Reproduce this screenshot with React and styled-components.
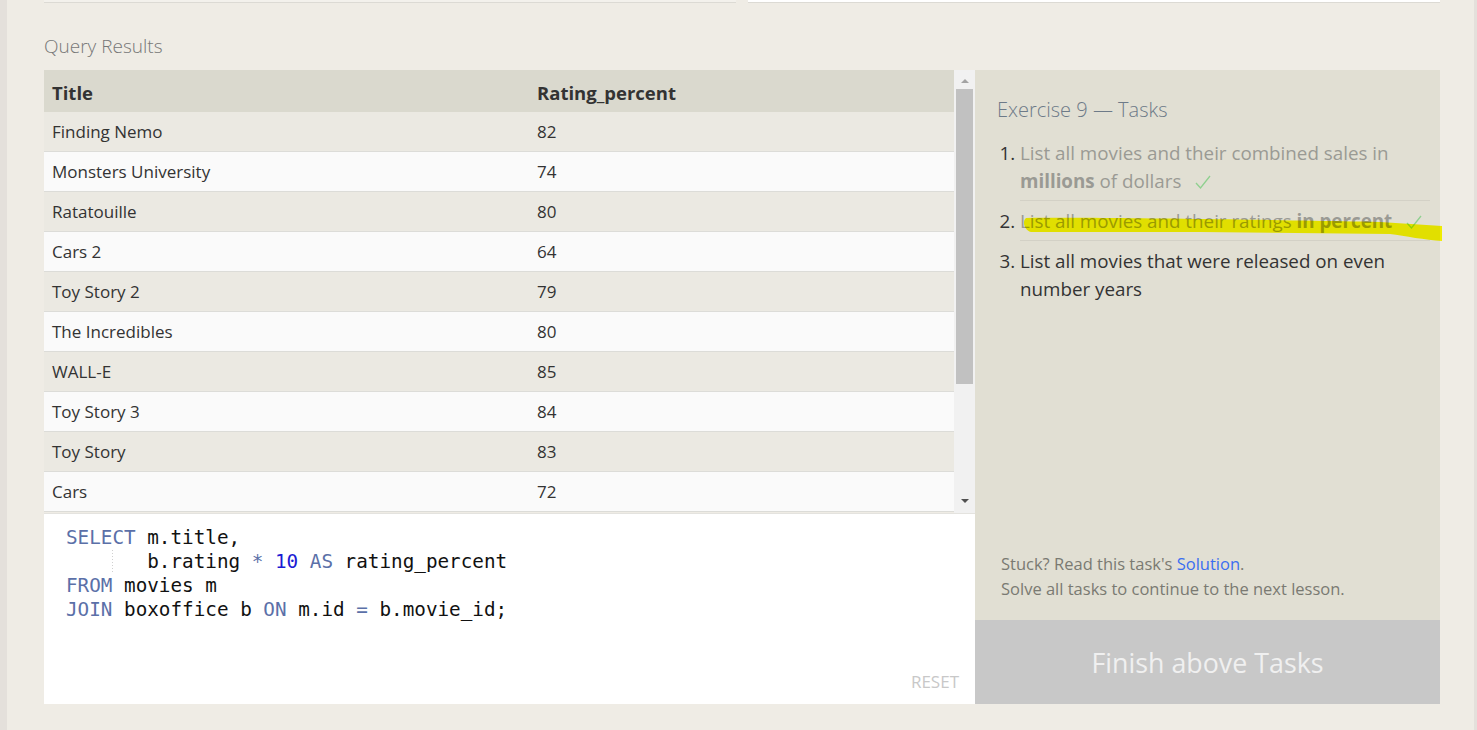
import styled, { createGlobalStyle } from "styled-components";

const GlobalStyle = createGlobalStyle`
  body {
    margin: 0;
    background: #e4e0db;
    font-family: "Open Sans", "Noto Sans", sans-serif;
    color: #333;
  }
`;

const Page = styled.div`
  margin: 0 3px 0 7px;
  min-height: 730px;
  background: #efece5;
  padding: 0 34px 0 37px;
  box-sizing: border-box;
  overflow: hidden;
`;

const TopStrip = styled.div`
  display: flex;
  gap: 12px;
  height: 3px;
`;

const TopPanel = styled.div`
  flex: ${(p) => (p.$wide ? "0 0 692px" : "1")};
  height: 2px;
  background: ${(p) => (p.$white ? "#fff" : "#f3f1ec")};
  border-bottom: 1px solid #dcdad4;
`;

const SectionLabel = styled.div`
  margin-top: 31px;
  height: 24px;
  line-height: 24px;
  font-size: 19px;
  font-weight: 300;
  color: #777;
  margin-bottom: 12px;
`;

const Workspace = styled.div`
  display: flex;
  height: 634px;
`;

const LeftColumn = styled.div`
  flex: 0 0 931px;
  display: flex;
  flex-direction: column;
`;

const ResultsArea = styled.div`
  display: flex;
  height: 444px;
  border-bottom: 1px solid #e4e3df;
  box-sizing: border-box;
`;

const TableWrap = styled.div`
  flex: 1;
  overflow: hidden;
`;

const Table = styled.table`
  width: 100%;
  table-layout: fixed;
  border-collapse: collapse;
  font-size: 17px;
`;

const HeadCell = styled.th`
  height: 42px;
  padding: 3px 8px 0;
  box-sizing: border-box;
  text-align: left;
  font-size: 18.5px;
  font-weight: 700;
  background: #dad9ce;
  color: #333;
  width: ${(p) => p.$w || "auto"};
`;

const Row = styled.tr`
  background: ${(p) => (p.$odd ? "#ebe9e2" : "#fafafa")};
`;

const Cell = styled.td`
  height: 39px;
  padding: 0 8px;
  border-bottom: 1px solid #dcdcd8;
  color: #333;
`;

const Scrollbar = styled.div`
  flex: 0 0 21px;
  background: #f1f1f1;
  display: flex;
  flex-direction: column;
  align-items: center;
  padding: 0 1px;
  box-sizing: border-box;
`;

const Arrow = styled.div`
  width: 0;
  height: 0;
  border-left: 4px solid transparent;
  border-right: 4px solid transparent;
  ${(p) =>
    p.$down
      ? "border-top: 4px solid #505050; margin-top: auto; margin-bottom: 10px;"
      : "border-bottom: 4px solid #a3a3a3; margin-top: 9px;"}
`;

const Thumb = styled.div`
  align-self: stretch;
  margin: 6px 1px 0 1px;
  height: 295px;
  background: #c1c1c1;
`;

const Editor = styled.div`
  flex: 1;
  background: #fff;
  display: flex;
  flex-direction: column;
  padding: 12px 16px 10px 22px;
`;

const Code = styled.pre`
  margin: 0;
  font-family: "DejaVu Sans Mono", "Liberation Mono", monospace;
  font-size: 19.3px;
  line-height: 24px;
  color: #111;
`;

const Kw = styled.span`
  color: ${(p) => (p.$num ? "#1b1bd3" : "#5b70a8")};
`;

const Guide = styled.span`
  background: repeating-linear-gradient(#d0d0d0 0 1px, transparent 1px 3px) left / 1px 100% no-repeat;
`;

const Reset = styled.div`
  margin-top: auto;
  align-self: flex-end;
  font-size: 17px;
  line-height: 24px;
  color: #c8c8c8;
  text-transform: uppercase;
`;

const TaskPanel = styled.div`
  flex: 0 0 465px;
  background: #e1dfd3;
  display: flex;
  flex-direction: column;
`;

const TaskHeading = styled.div`
  padding: 26px 0 0 22px;
  font-size: 20px;
  line-height: 28px;
  font-weight: 300;
  color: #6d7a88;
`;

const TaskList = styled.ol`
  position: relative;
  margin: 9px 10px 0 22px;
  padding: 0 0 0 23px;
  font-size: 18.8px;
  line-height: 28px;
`;

const Task = styled.li`
  padding: 6px 0 5px;
  color: ${(p) => (p.$done ? "#9a9a94" : "#333")};
  border-bottom: ${(p) => (p.$last ? "none" : "1px solid #d3d1c6")};

  &::marker {
    color: #333;
  }

  b {
    font-weight: 700;
  }
`;

const Check = styled.svg`
  margin-left: 14px;
  vertical-align: -1px;
`;

const Highlight = styled.svg`
  position: absolute;
  left: -20px;
  top: 0;
  pointer-events: none;
  mix-blend-mode: multiply;
  overflow: visible;
`;

const Footer = styled.div`
  margin-top: auto;
  padding: 0 0 19px 26px;
  font-size: 16.5px;
  line-height: 25px;
  color: #7a7a72;
`;

const Link = styled.a`
  color: #3b6ef0;
  text-decoration: none;
`;

const FinishButton = styled.button`
  height: 84px;
  border: none;
  background: #c8c8c8;
  color: #f0f0f0;
  font-family: inherit;
  font-size: 26.8px;
  font-weight: 400;
  cursor: default;
`;

const rows = [
  ["Finding Nemo", 82],
  ["Monsters University", 74],
  ["Ratatouille", 80],
  ["Cars 2", 64],
  ["Toy Story 2", 79],
  ["The Incredibles", 80],
  ["WALL-E", 85],
  ["Toy Story 3", 84],
  ["Toy Story", 83],
  ["Cars", 72],
];

function CheckMark() {
  return (
    <Check width="16" height="14" viewBox="0 0 16 14">
      <polyline points="1,8 5.5,13 15,1" fill="none" stroke="#8fd08f" strokeWidth="1.3" />
    </Check>
  );
}

export default function App() {
  return (
    <>
      <GlobalStyle />
      <Page>
        <TopStrip>
          <TopPanel $wide />
          <TopPanel $white />
        </TopStrip>
        <SectionLabel>Query Results</SectionLabel>
        <Workspace>
          <LeftColumn>
            <ResultsArea>
              <TableWrap>
                <Table>
                  <thead>
                    <tr>
                      <HeadCell $w="485px">Title</HeadCell>
                      <HeadCell>Rating_percent</HeadCell>
                    </tr>
                  </thead>
                  <tbody>
                    {rows.map(([title, rating], i) => (
                      <Row key={title} $odd={i % 2 === 0}>
                        <Cell>{title}</Cell>
                        <Cell>{rating}</Cell>
                      </Row>
                    ))}
                  </tbody>
                </Table>
              </TableWrap>
              <Scrollbar>
                <Arrow />
                <Thumb />
                <Arrow $down />
              </Scrollbar>
            </ResultsArea>
            <Editor>
              <Code>
                <Kw>SELECT</Kw> m.title,{"\n"}
                {"    "}
                <Guide>{"   "}</Guide>b.rating <Kw>*</Kw> <Kw $num>10</Kw> <Kw>AS</Kw> rating_percent{"\n"}
                <Kw>FROM</Kw> movies m{"\n"}
                <Kw>JOIN</Kw> boxoffice b <Kw>ON</Kw> m.id <Kw>=</Kw> b.movie_id;
              </Code>
              <Reset>Reset</Reset>
            </Editor>
          </LeftColumn>
          <TaskPanel>
            <TaskHeading>Exercise 9 — Tasks</TaskHeading>
            <TaskList>
              <Task $done>
                List all movies and their combined sales in <b>millions</b> of dollars
                <CheckMark />
              </Task>
              <Task $done>
                List all movies and their ratings <b>in percent</b>
                <CheckMark />
              </Task>
              <Task $last>List all movies that were released on even number years</Task>
              <Highlight width="10" height="10">
                <path
                  d="M51 148 C 120 147, 300 150, 405 152 L 467 156 L 467 171 C 450 170, 430 166, 415 164 L 225 162 L 56 162 C 49 160, 47 151, 51 148 Z"
                  transform="translate(-2 -63)"
                  fill="#ffff00"
                />
              </Highlight>
            </TaskList>
            <Footer>
              Stuck? Read this task's <Link href="#">Solution</Link>.
              <br />
              Solve all tasks to continue to the next lesson.
            </Footer>
            <FinishButton>Finish above Tasks</FinishButton>
          </TaskPanel>
        </Workspace>
      </Page>
    </>
  );
}
